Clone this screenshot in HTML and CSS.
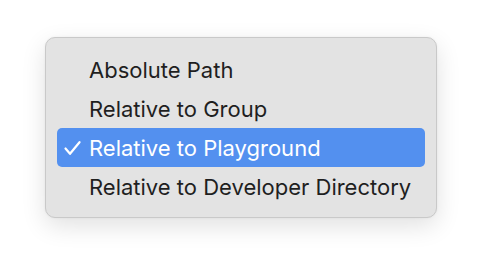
FILE: index.html
```html
<!DOCTYPE html>
<html lang="en">
<head>
  <meta charset="UTF-8">
  <title>Path menu</title>
  <link rel="stylesheet" href="styles.css">
</head>
<body>
  <div class="menu">
    <div class="item"><span class="check"></span>Absolute Path</div>
    <div class="item"><span class="check"></span>Relative to Group</div>
    <div class="item selected">
      <span class="check">
        <svg width="17" height="14" viewBox="0 0 17 14"><path d="M1.5 7.5 L6 12.8 L15.5 1.2" fill="none" stroke="#fff" stroke-width="2.2" stroke-linecap="round" stroke-linejoin="round"/></svg>
      </span>Relative to Playground
    </div>
    <div class="item"><span class="check"></span>Relative to Developer Directory</div>
  </div>
</body>
</html>
```

FILE: styles.css
```css
body {
  margin: 0;
  width: 482px;
  height: 272px;
  background: #ffffff;
  font-family: Inter, "Noto Sans", sans-serif;
}

.menu {
  margin: 37px 0 0 45px;
  width: 368px;
  padding: 12px 11px 11px;
  background: #e3e3e3;
  border: 1px solid #c9c9c9;
  border-radius: 10px;
  box-shadow: 0 8px 24px rgba(0, 0, 0, 0.12), 0 0 3px rgba(0, 0, 0, 0.05);
}

.item {
  display: flex;
  align-items: center;
  height: 39px;
  font-size: 22px;
  color: #1f1f1f;
  border-radius: 5px;
}

.check {
  width: 32px;
  display: flex;
  justify-content: flex-end;
  padding-top: 1px;
}

.check svg {
  margin-right: 8px;
}

.selected {
  background: #5390ef;
  color: #ffffff;
}
```
